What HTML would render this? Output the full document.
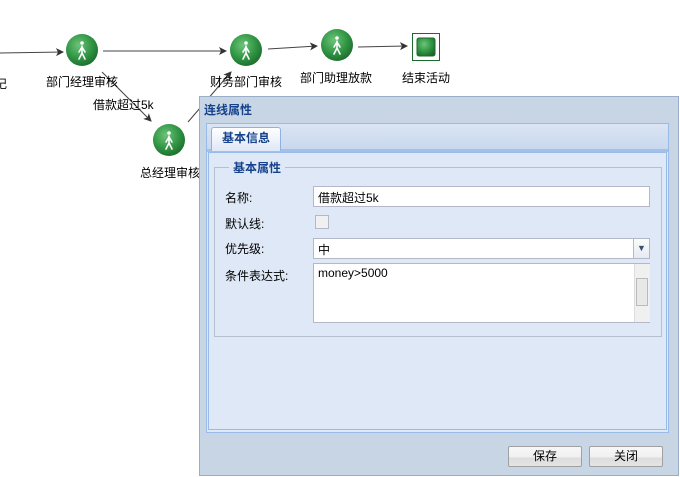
<!DOCTYPE html>
<html><head><meta charset="utf-8"><style>
body{margin:0;width:680px;height:477px;background:#fff;position:relative;overflow:hidden;font-family:"Liberation Sans","Noto Sans CJK SC",sans-serif;font-size:12px;color:#000}
.a{position:absolute}
.lbl{position:absolute;white-space:nowrap;font-size:12px}
.dlg{left:199px;top:96px;width:480px;height:380px;background:#c8d5e4;border:1px solid #99aec8;box-sizing:border-box}
.inp{position:absolute;background:#fff;border:1px solid #b5b8c8;box-sizing:border-box;padding:2px 4px;font-size:12px}
.btn{position:absolute;width:74px;height:21px;border:1px solid #a0a0a0;border-radius:2px;box-sizing:border-box;background:linear-gradient(#f7f7f7 0,#f0f0f0 55%,#dcdcdc 56%,#e4e4e4 100%);text-align:center;line-height:19px;font-size:12px}
</style></head><body>
<svg class="a" style="left:0;top:0" width="680" height="477">
<defs>
<radialGradient id="g" cx="40%" cy="35%" r="70%"><stop offset="0" stop-color="#6cc47a"/><stop offset="0.6" stop-color="#2f9442"/><stop offset="1" stop-color="#1d6a2d"/></radialGradient>
<marker id="m" markerWidth="8" markerHeight="8" refX="7" refY="4" orient="auto"><path d="M0,0 L8,4 L0,8 L2,4 z" fill="#333"/></marker>
<g id="n"><circle r="16" fill="url(#g)"/><g stroke="#fff" stroke-width="1.6" fill="none" stroke-linecap="round"><circle cx="0" cy="-7" r="1.8" fill="#fff" stroke="none"/><path d="M0,-4 L0,3 M0,3 L-3,9 M0,3 L3,9 M0,-3 L-3,2 M0,-3 L3,2"/></g></g>
</defs>
<g stroke="#444" stroke-width="1" marker-end="url(#m)">
<line x1="0" y1="53" x2="63" y2="52"/>
<line x1="103" y1="51" x2="226" y2="51"/>
<line x1="268" y1="49" x2="317" y2="46"/>
<line x1="358" y1="47" x2="407" y2="46"/>
<line x1="102" y1="72" x2="151" y2="121"/>
<line x1="188" y1="122" x2="231" y2="72"/>
</g>
<use href="#n" x="82" y="50"/>
<use href="#n" x="246" y="50"/>
<use href="#n" x="337" y="45"/>
<use href="#n" x="169" y="140"/>
<rect x="412.5" y="33.5" width="27" height="27" fill="#fff" stroke="#1d6a2d"/>
<rect x="417" y="38" width="18" height="18" rx="2" fill="url(#g)" stroke="#1d6a2d"/>
</svg>
<div class="lbl" style="left:-5px;top:75px">记</div>
<div class="lbl" style="left:46px;top:73px">部门经理审核</div>
<div class="lbl" style="left:210px;top:73px">财务部门审核</div>
<div class="lbl" style="left:300px;top:69px">部门助理放款</div>
<div class="lbl" style="left:402px;top:69px">结束活动</div>
<div class="lbl" style="left:93px;top:96px">借款超过5k</div>
<div class="lbl" style="left:140px;top:164px">总经理审核</div>

<div class="a dlg">
 <div class="a" style="left:4px;top:4px;font-weight:bold;color:#15428b;font-size:12px">连线属性</div>
 <div class="a" style="left:6px;top:26px;width:463px;height:310px;border:1px solid #99bbe8;background:#dfe8f6;box-sizing:border-box">
  <div class="a" style="left:0;top:0;width:461px;height:25px;background:linear-gradient(#dae5f4,#c9d8ee);border-bottom:3px solid #a5c0e6"></div>
  <div class="a" style="left:4px;top:3px;width:70px;height:24px;background:linear-gradient(#fff,#dfe8f6);border:1px solid #8db2e3;border-bottom:none;border-radius:3px 3px 0 0;font-weight:bold;color:#15428b;text-align:center;line-height:20px;box-sizing:border-box">基本信息</div>
  <div class="a" style="left:1px;top:28px;width:459px;height:278px;border:1px solid #99bbe8;box-sizing:border-box"></div>
 </div>
 <div class="a" style="left:14px;top:70px;width:448px;height:170px;border:1px solid #b5bfd0;box-sizing:border-box"></div>
 <div class="a" style="left:29px;top:62px;padding:0 4px;background:#dfe8f6;font-weight:bold;color:#15428b">基本属性</div>
 <div class="lbl" style="left:25px;top:92px">名称:</div>
 <div class="lbl" style="left:25px;top:118px">默认线:</div>
 <div class="lbl" style="left:25px;top:143px">优先级:</div>
 <div class="lbl" style="left:25px;top:170px">条件表达式:</div>
 <div class="inp" style="left:113px;top:89px;width:337px;height:21px">借款超过5k</div>
 <div class="a" style="left:115px;top:118px;width:12px;height:12px;border:1px solid #b5b8c8;background:#f0f0f0"></div>
 <div class="inp" style="left:113px;top:141px;width:337px;height:21px">中</div>
 <div class="a" style="left:433px;top:141px;width:17px;height:21px;border:1px solid #b5b8c8;box-sizing:border-box;background:linear-gradient(#fbfbfb,#e6ebf2);text-align:center;font-size:9px;line-height:19px;color:#3a4f6b">▼</div>
 <div class="inp" style="left:113px;top:166px;width:337px;height:60px">money&gt;5000</div>
 <div class="a" style="left:434px;top:167px;width:15px;height:58px;background:#f0f0f0;border-left:1px solid #ddd">
  <div class="a" style="left:1px;top:14px;width:12px;height:28px;background:#e8e8e8;border:1px solid #bbb;box-sizing:border-box"></div>
 </div>
 <div class="btn" style="left:308px;top:349px">保存</div>
 <div class="btn" style="left:389px;top:349px">关闭</div>
</div>
</body></html>
